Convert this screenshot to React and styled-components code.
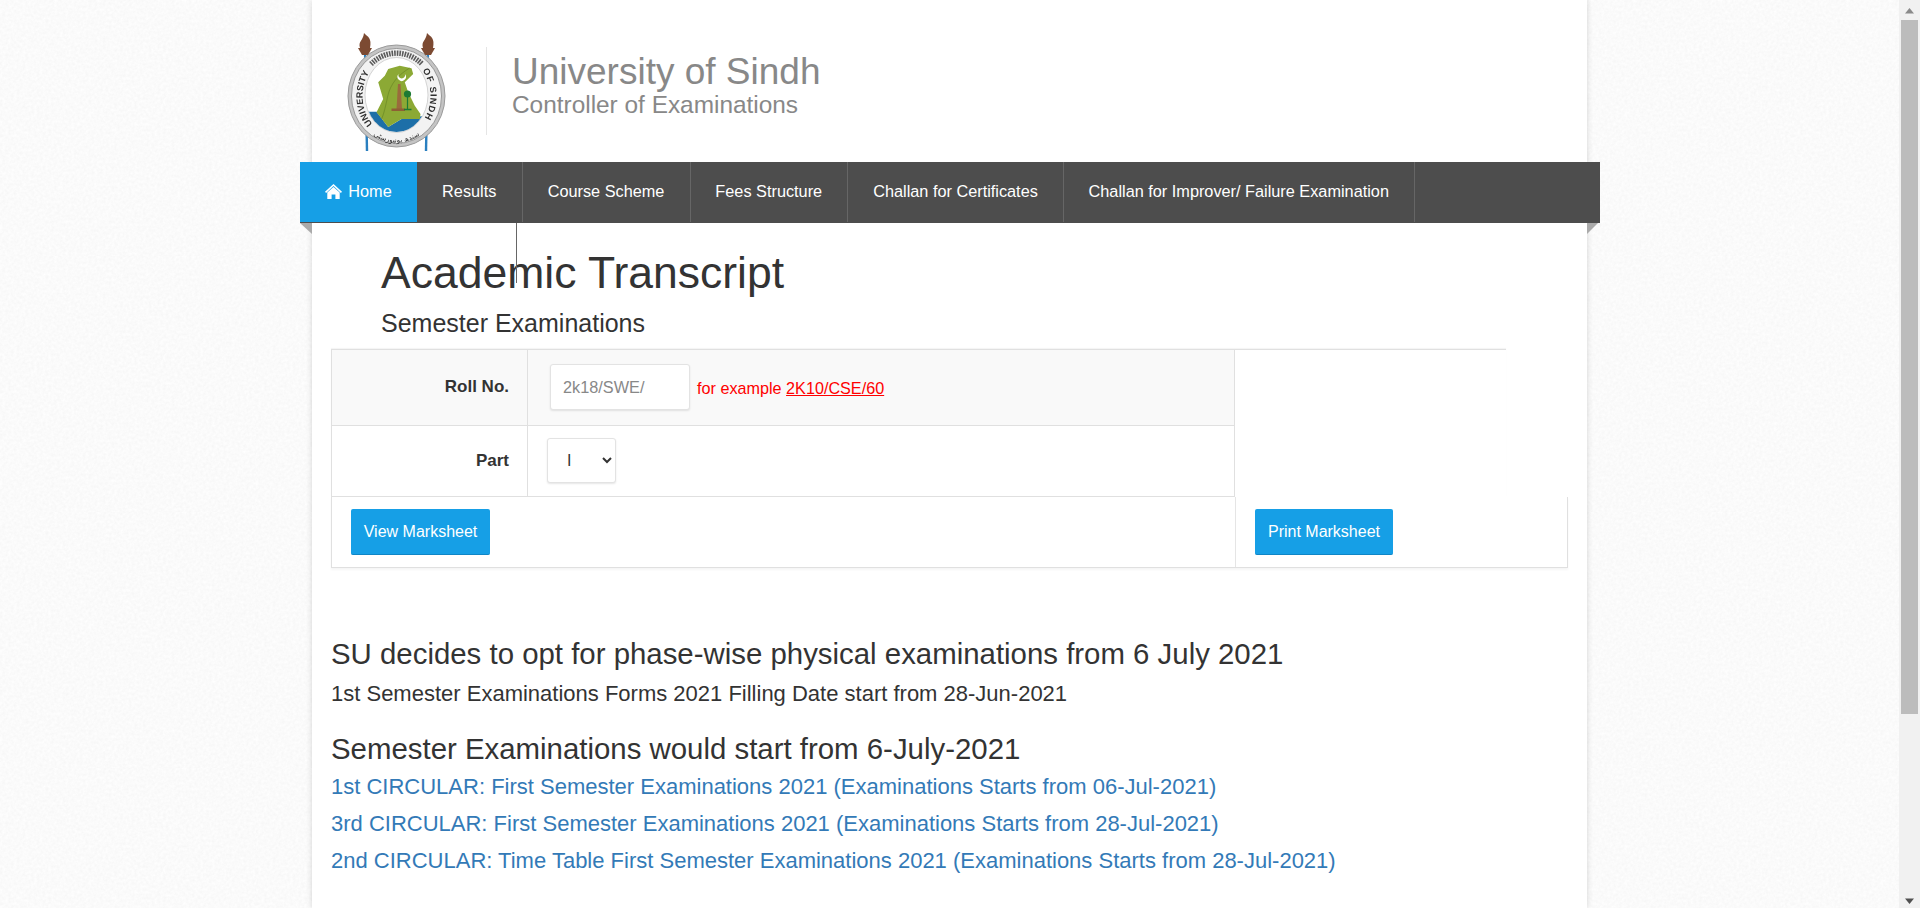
import React from "react";
import styled, { createGlobalStyle } from "styled-components";

const noiseSvg = `<svg xmlns='http://www.w3.org/2000/svg' width='256' height='256'><filter id='n'><feTurbulence type='fractalNoise' baseFrequency='0.35' numOctaves='3' stitchTiles='stitch'/><feColorMatrix values='0.09 0 0 0 0.915 0.09 0 0 0 0.915 0.09 0 0 0 0.915 0 0 0 0 1'/></filter><rect width='256' height='256' filter='url(#n)'/></svg>`;
const noise = `url("data:image/svg+xml,${encodeURIComponent(noiseSvg)}")`;

const Global = createGlobalStyle`
  html, body { margin: 0; padding: 0; height: 100%; overflow: hidden; }
  body { font-family: "Liberation Sans", Arial, sans-serif; font-size: 16px; color: #333; }
  * { box-sizing: border-box; }
`;

const Frame = styled.div`
  display: flex;
  height: 908px;
  overflow: hidden;
`;
const Page = styled.div`
  flex: 1;
  min-width: 0;
  background-color: #f5f5f5;
  background-image: ${noise};
  padding-left: 312px;
`;
const Sheet = styled.div`
  position: relative;
  width: 1275px;
  height: 908px;
  background: #fff;
  box-shadow: 0 0 6px rgba(0, 0, 0, 0.16);
`;
const Masthead = styled.header`
  display: flex;
  align-items: flex-start;
  height: 162px;
  padding-left: 30px;
`;
const LogoSvg = styled.svg`
  width: 110px;
  height: 125px;
  margin-top: 29px;
  filter: blur(0.35px);
  flex: none;
`;
const Brand = styled.div`
  margin: 47px 0 0 34px;
  height: 88px;
  border-left: 1px solid #e5e5e5;
  padding: 7px 0 0 25px;
  display: flex;
  flex-direction: column;
  gap: 3px;
  color: #888;
`;
const BrandTitle = styled.div`
  font-size: 37px;
  line-height: 36px;
`;
const BrandSub = styled.div`
  font-size: 24.4px;
  line-height: 24px;
`;
const NavBar = styled.nav`
  position: relative;
  display: flex;
  height: 61px;
  margin: 0 -13px 0 -12px;
  background: #4d4d4d;
`;
const NavItem = styled.a`
  flex: none;
  display: flex;
  align-items: center;
  justify-content: center;
  gap: 6px;
  width: ${(p) => p.$w}px;
  height: 60px;
  padding-bottom: 2px;
  font-size: 16.3px;
  color: #fff;
  background: ${(p) => (p.$active ? "#169fe6" : "transparent")};
  border-right: ${(p) => (p.$active ? "0" : "1px solid #666")};
  white-space: nowrap;
`;
const StrayLine = styled.span`
  position: absolute;
  left: 216px;
  top: 61px;
  width: 1px;
  height: 60px;
  background: #666;
  z-index: 2;
`;
const Fold = styled.span`
  position: absolute;
  top: 61px;
  ${(p) => (p.$side === "left" ? "left: 0;" : "right: 2px;")}
  width: ${(p) => (p.$side === "left" ? 12 : 11)}px;
  height: 11px;
  background: #aaa;
  clip-path: ${(p) =>
    p.$side === "left"
      ? "polygon(0 0, 100% 0, 100% 100%)"
      : "polygon(0 0, 100% 0, 0 100%)"};
`;
const Intro = styled.div`
  padding: 22px 0 0 69px;
`;
const PageTitle = styled.h1`
  margin: 0;
  font-size: 44.5px;
  line-height: 56px;
  font-weight: 400;
  color: #333;
`;
const PageSub = styled.h3`
  margin: 8px 0 0;
  font-size: 25px;
  line-height: 28px;
  font-weight: 400;
  color: #333;
`;
const Panel = styled.section`
  margin: 12px 0 0 19px;
  width: 1237px;
`;
const TopTable = styled.div`
  width: 1175px;
  border-top: 1px solid #e0e0e0;
  box-shadow: 0 -1px 1px rgba(0, 0, 0, 0.04);
`;
const Row = styled.div`
  display: flex;
  width: 904px;
  height: ${(p) => p.$h}px;
  background: ${(p) => (p.$tint ? "#f9f9f9" : "#fff")};
  border-left: 1px solid #e0e0e0;
  border-right: 1px solid #e0e0e0;
  border-bottom: 1px solid #e0e0e0;
`;
const LabelCell = styled.div`
  width: 196px;
  border-right: 1px solid #e0e0e0;
  padding: ${(p) => p.$top}px 18px 0 0;
  text-align: right;
  font-size: 17px;
  line-height: 22px;
  font-weight: 700;
  color: #333;
`;
const FieldCell = styled.div`
  flex: 1;
  display: flex;
  align-items: flex-start;
  padding: ${(p) => p.$top}px 0 0 ${(p) => p.$left}px;
`;
const TextInput = styled.input`
  width: 140px;
  height: 46px;
  padding: 0 12px;
  border: 1px solid #e3e3e3;
  border-radius: 3px;
  background: #fff;
  box-shadow: 0 1px 2px rgba(0, 0, 0, 0.1);
  font: 16.3px "Liberation Sans", Arial, sans-serif;
  color: #333;
  &::placeholder { color: #888; opacity: 1; }
`;
const Hint = styled.span`
  margin: 14px 0 0 7px;
  font-size: 16.2px;
  line-height: 20px;
  color: #f00;
`;
const HintLink = styled.a`
  color: #f00;
  text-decoration: underline;
`;
const Select = styled.select`
  width: 69px;
  height: 45px;
  padding: 0 15px;
  border: 1px solid #e3e3e3;
  border-radius: 3px;
  background: #fff;
  box-shadow: 0 1px 2px rgba(0, 0, 0, 0.1);
  font: 16px "Liberation Sans", Arial, sans-serif;
  color: #333;
`;
const ActionRow = styled.div`
  display: flex;
  height: 71px;
  border-left: 1px solid #e0e0e0;
  border-right: 1px solid #e0e0e0;
  border-bottom: 1px solid #e0e0e0;
  box-shadow: 0 2px 2px rgba(0, 0, 0, 0.04);
`;
const ActionCell = styled.div`
  width: ${(p) => (p.$w ? `${p.$w}px` : "auto")};
  flex: ${(p) => (p.$w ? "none" : "1")};
  border-right: ${(p) => (p.$w ? "1px solid #e5e5e5" : "0")};
  padding: 12px 0 0 ${(p) => p.$left}px;
`;
const Button = styled.button`
  width: ${(p) => p.$w}px;
  height: 46px;
  padding: 0;
  border: 0;
  border-bottom: 1px solid #0f86c6;
  border-radius: 2px;
  background: #169fe6;
  color: #fff;
  font: 16px "Liberation Sans", Arial, sans-serif;
`;
const News = styled.section`
  padding: 68px 0 0 19px;
`;
const NewsHead = styled.h3`
  margin: ${(p) => p.$top}px 0 0;
  font-size: 29.4px;
  line-height: 36px;
  font-weight: 400;
  color: #333;
`;
const NewsText = styled.p`
  margin: 7px 0 0;
  font-size: 22px;
  line-height: 30px;
  color: #333;
`;
const NewsLink = styled.a`
  display: block;
  margin-top: ${(p) => p.$top}px;
  font-size: 22px;
  line-height: 30px;
  color: #337ab7;
`;
const ScrollTrack = styled.aside`
  position: relative;
  flex: none;
  width: 21px;
  height: 908px;
  background: #f1f1f1;
`;
const ScrollThumb = styled.div`
  position: absolute;
  left: 2px;
  top: 20px;
  width: 17px;
  height: 694px;
  background: #bcbcbc;
`;
const ScrollArrow = styled.svg`
  position: absolute;
  left: 3px;
  width: 15px;
  height: 8px;
  ${(p) => (p.$down ? "bottom: 3px;" : "top: 7px;")}
`;

function Logo() {
  return (
    <LogoSvg viewBox="0 0 110 125" aria-label="University of Sindh crest">
      <defs>
        <path id="arcLeft" d="M 30.5 94.9 A 34 39.5 0 0 1 35 34.6" />
        <path id="arcRight" d="M 80.5 41.6 A 34 39.5 0 0 1 78.5 94.9" />
        <path id="arcBottom" d="M 20 95 A 43 46 0 0 0 89 95" />
        <clipPath id="inner"><ellipse cx="54.5" cy="66" rx="31" ry="37" /></clipPath>
      </defs>
      <path d="M23 20 L25 122" stroke="#2a7fc0" strokeWidth="2.4" fill="none" />
      <path d="M86 20 L84 122" stroke="#2a7fc0" strokeWidth="2.4" fill="none" />
      {[23, 86].map((x) => (
        <g key={x} fill="#7c4a32">
          <path d={`M${x - 1} 4 C${x + 3} 8 ${x + 7} 9 ${x + 5} 19 L${x - 5} 19 C${x - 7} 12 ${x - 2} 12 ${x - 1} 4 Z`} />
          <path d={`M${x - 7} 19 H${x + 7} L${x + 3} 26 H${x - 3} Z`} />
        </g>
      ))}
      <ellipse cx="54.5" cy="67" rx="48.5" ry="51" fill="#c4c4c4" stroke="#9a9a9a" strokeWidth="1" />
      <ellipse cx="54.5" cy="67" rx="45" ry="47.5" fill="#f2f2f2" stroke="#858585" strokeWidth="0.8" />
      <ellipse cx="54.5" cy="66" rx="31.5" ry="37.5" fill="#fff" stroke="#bbb" strokeWidth="0.6" />
      <path d="M29 35 A38 42 0 0 1 80 35" fill="none" stroke="#333" strokeWidth="5.4" strokeDasharray="1.6 1" opacity="0.8" />
      <text fontSize="9" fontWeight="700" fill="#2e2e2e" fontFamily="'Liberation Sans', sans-serif" letterSpacing="0.1">
        <textPath href="#arcLeft">UNIVERSITY</textPath>
      </text>
      <text fontSize="9" fontWeight="700" fill="#2e2e2e" fontFamily="'Liberation Sans', sans-serif" letterSpacing="1">
        <textPath href="#arcRight">OF SINDH</textPath>
      </text>
      <text fontSize="7" fill="#222" fontFamily="'DejaVu Sans', sans-serif" textAnchor="middle">
        <textPath href="#arcBottom" startOffset="50%">سندھ یونیورسٹی</textPath>
      </text>
      <g clipPath="url(#inner)">
        <g transform="translate(1.5 0)">
          <path d="M20 82.7 H33 L44.7 98 L58 90 L80 87 V108 H20 Z" fill="#1d6fa8" />
          <path d="M44.7 40 L56.3 36.7 L68 39.3 L69.7 45 L61.3 53.3 L64.7 63.3 L71.3 76.7 L77 85 L76.3 90 L58 90 L44.7 98 L33 83.3 L39.7 70 L34.7 53.3 L41.3 46.7 Z" fill="#8ca935" />
          <path d="M66 39 C55 46 47 54 44 68 C42 78 40 86 38 90" fill="none" stroke="#5d7a1f" strokeWidth="0.5" />
          <path d="M53 80 L54.5 55 H57 L58.5 80 Z" fill="#9a6b3c" />
          <rect x="48" y="79.5" width="13.5" height="2.5" fill="#8e5f34" />
          <path d="M55 45 a4.2 4.2 0 1 0 6.4 0 a3.4 3.4 0 1 1 -6.4 0 Z" fill="#fff" />
          <circle cx="64" cy="65" r="3.6" fill="#1d7a34" />
          <path d="M64 65 V80" stroke="#1d7a34" strokeWidth="1.2" />
          <path d="M60.5 80.5 H68" stroke="#1d7a34" strokeWidth="1.4" />
        </g>
      </g>
    </LogoSvg>
  );
}

const HomeIcon = () => (
  <svg width="17" height="15" viewBox="0 0 17 15" aria-hidden="true">
    <path
      fill="#fff"
      d="M8.5 0 L17 7.8 L15.9 8.9 L8.5 2 L1.1 8.9 L0 7.8 Z M8.5 3 L14.7 8.6 V15 H10.4 V10.4 H6.6 V15 H2.3 V8.6 Z"
    />
  </svg>
);

export default function App() {
  return (
    <Frame>
      <Global />
      <Page>
        <Sheet>
          <Masthead>
            <Logo />
            <Brand>
              <BrandTitle>University of Sindh</BrandTitle>
              <BrandSub>Controller of Examinations</BrandSub>
            </Brand>
          </Masthead>
          <NavBar>
            <NavItem $active $w={117}><HomeIcon />Home</NavItem>
            <NavItem $w={105.5}>Results</NavItem>
            <NavItem $w={168}>Course Scheme</NavItem>
            <NavItem $w={157.5}>Fees Structure</NavItem>
            <NavItem $w={216}>Challan for Certificates</NavItem>
            <NavItem $w={350.5}>Challan for Improver/ Failure Examination</NavItem>
            <StrayLine />
            <Fold $side="left" />
            <Fold $side="right" />
          </NavBar>
          <Intro>
            <PageTitle>Academic Transcript</PageTitle>
            <PageSub>Semester Examinations</PageSub>
          </Intro>
          <Panel>
            <TopTable>
              <Row $tint $h={76}>
                <LabelCell $top={26}>Roll No.</LabelCell>
                <FieldCell $top={14} $left={22}>
                  <TextInput placeholder="2k18/SWE/" />
                  <Hint>for example <HintLink>2K10/CSE/60</HintLink></Hint>
                </FieldCell>
              </Row>
              <Row $h={71}>
                <LabelCell $top={24}>Part</LabelCell>
                <FieldCell $top={12} $left={19}>
                  <Select defaultValue="I"><option>I</option><option>II</option></Select>
                </FieldCell>
              </Row>
            </TopTable>
            <ActionRow>
              <ActionCell $w={904} $left={19}><Button $w={139}>View Marksheet</Button></ActionCell>
              <ActionCell $left={19}><Button $w={138}>Print Marksheet</Button></ActionCell>
            </ActionRow>
          </Panel>
          <News>
            <NewsHead $top={0}>SU decides to opt for phase-wise physical examinations from 6 July 2021</NewsHead>
            <NewsText>1st Semester Examinations Forms 2021 Filling Date start from 28-Jun-2021</NewsText>
            <NewsHead $top={22}>Semester Examinations would start from 6-July-2021</NewsHead>
            <NewsLink $top={5}>1st CIRCULAR: First Semester Examinations 2021 (Examinations Starts from 06-Jul-2021)</NewsLink>
            <NewsLink $top={7}>3rd CIRCULAR: First Semester Examinations 2021 (Examinations Starts from 28-Jul-2021)</NewsLink>
            <NewsLink $top={7}>2nd CIRCULAR: Time Table First Semester Examinations 2021 (Examinations Starts from 28-Jul-2021)</NewsLink>
          </News>
        </Sheet>
      </Page>
      <ScrollTrack>
        <ScrollArrow viewBox="0 0 15 8" aria-hidden="true"><polygon points="7.5,1 12,6.5 3,6.5" fill="#8a8a8a" /></ScrollArrow>
        <ScrollThumb />
        <ScrollArrow $down viewBox="0 0 15 8" aria-hidden="true"><polygon points="3,1.5 12,1.5 7.5,7" fill="#505050" /></ScrollArrow>
      </ScrollTrack>
    </Frame>
  );
}
